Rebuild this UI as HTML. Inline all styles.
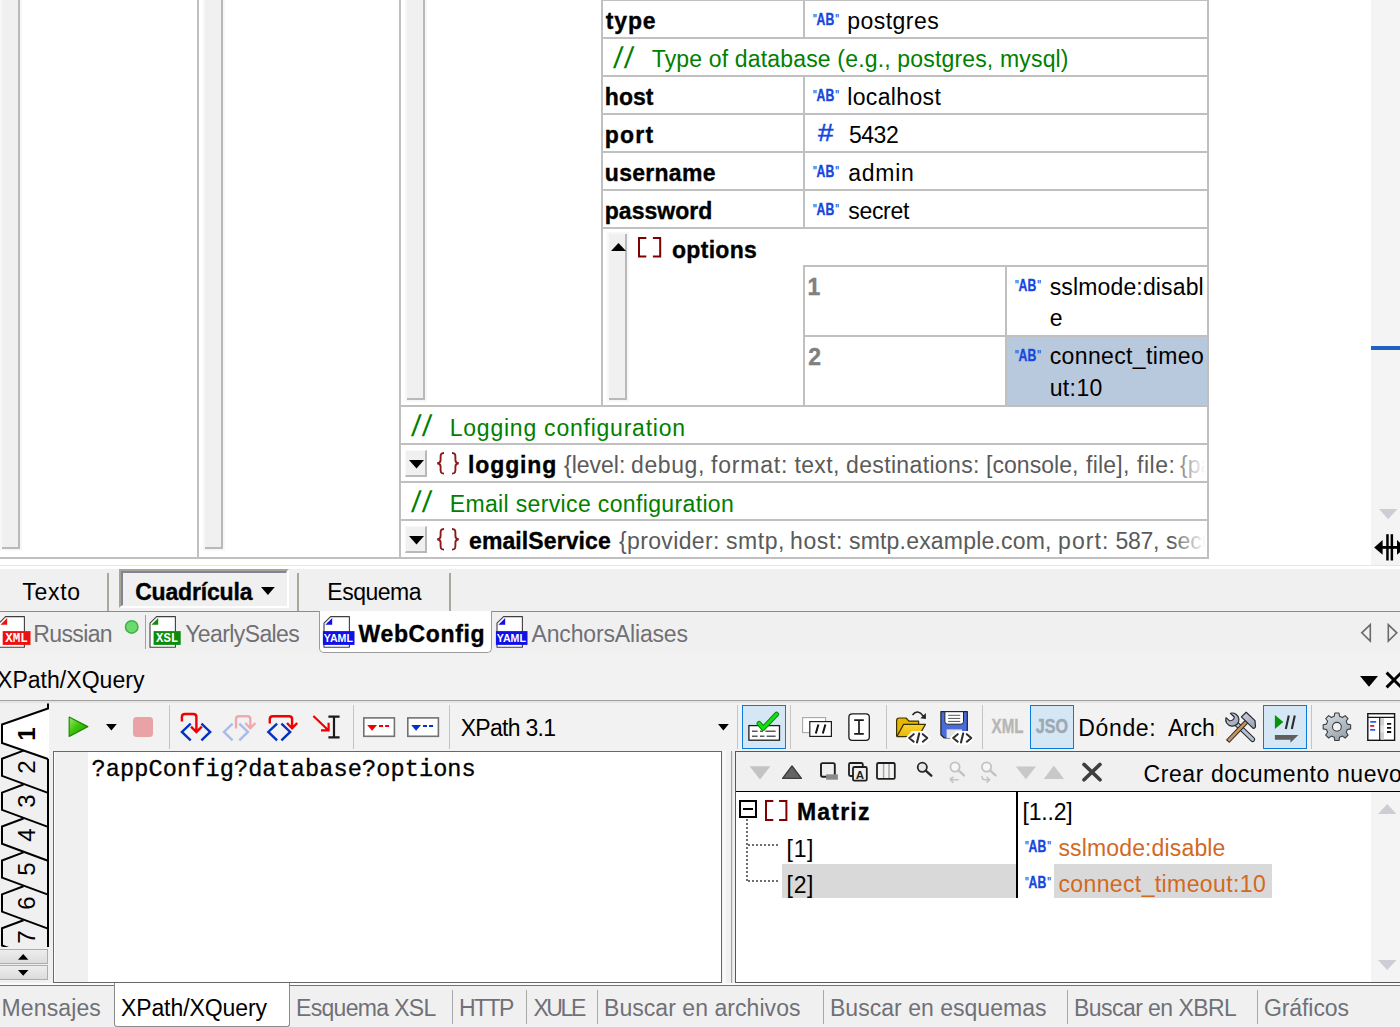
<!DOCTYPE html>
<html lang="es"><head><meta charset="utf-8"><title>XMLSpy - WebConfig</title>
<style>
html,body{margin:0;padding:0;}
body{width:1400px;height:1027px;position:relative;overflow:hidden;background:#fff;font-family:"Liberation Sans",sans-serif;color:#000;}
.a{position:absolute;box-sizing:border-box;}
.t{position:absolute;white-space:pre;}
svg{position:absolute;overflow:visible;}
.ab{font-family:"Liberation Sans",sans-serif;font-weight:700;font-size:16px;fill:#1747DC;stroke:#1747DC;stroke-width:0.35px;}
</style></head><body>
<div class="a" id="gridview" style="left:0;top:0;width:1400px;height:566px;background:#fff;overflow:hidden"><div class="a" style="left:0px;top:-12px;width:22px;height:563px;background:#F7F7F7;"></div><div class="a" style="left:2px;top:-10px;width:18px;height:559px;background:#F0F0F0;border-right:2px solid #B9B9B9;border-bottom:2px solid #B9B9B9;"></div><div class="a" style="left:203px;top:-12px;width:22px;height:563px;background:#F7F7F7;"></div><div class="a" style="left:205px;top:-10px;width:18px;height:559px;background:#F0F0F0;border-right:2px solid #B9B9B9;border-bottom:2px solid #B9B9B9;"></div><div class="a" style="left:405px;top:-12px;width:22px;height:414px;background:#F7F7F7;"></div><div class="a" style="left:407px;top:-10px;width:18px;height:410px;background:#F0F0F0;border-right:2px solid #B9B9B9;border-bottom:2px solid #B9B9B9;"></div><div class="a" style="left:607px;top:232px;width:22px;height:170px;background:#F7F7F7;"></div><div class="a" style="left:609px;top:234px;width:18px;height:166px;background:#F0F0F0;border-right:2px solid #B9B9B9;border-bottom:2px solid #B9B9B9;"></div><div class="a" style="left:1007px;top:337px;width:200px;height:68px;background:#B8C8DD;"></div><div class="a" style="left:197px;top:0px;width:2px;height:559px;background:#C0C0C0;"></div><div class="a" style="left:399px;top:0px;width:2px;height:559px;background:#C0C0C0;"></div><div class="a" style="left:601px;top:0px;width:2px;height:407px;background:#C0C0C0;"></div><div class="a" style="left:803px;top:0px;width:2px;height:38px;background:#C0C0C0;"></div><div class="a" style="left:803px;top:76px;width:2px;height:153px;background:#C0C0C0;"></div><div class="a" style="left:803px;top:265px;width:2px;height:142px;background:#C0C0C0;"></div><div class="a" style="left:1005px;top:265px;width:2px;height:142px;background:#C0C0C0;"></div><div class="a" style="left:1207px;top:0px;width:2px;height:559px;background:#C0C0C0;"></div><div class="a" style="left:601px;top:-1px;width:608px;height:2px;background:#C0C0C0;"></div><div class="a" style="left:601px;top:37px;width:608px;height:2px;background:#C0C0C0;"></div><div class="a" style="left:601px;top:75px;width:608px;height:2px;background:#C0C0C0;"></div><div class="a" style="left:601px;top:113px;width:608px;height:2px;background:#C0C0C0;"></div><div class="a" style="left:601px;top:151px;width:608px;height:2px;background:#C0C0C0;"></div><div class="a" style="left:601px;top:189px;width:608px;height:2px;background:#C0C0C0;"></div><div class="a" style="left:601px;top:227px;width:608px;height:2px;background:#C0C0C0;"></div><div class="a" style="left:803px;top:265px;width:406px;height:2px;background:#C0C0C0;"></div><div class="a" style="left:803px;top:335px;width:406px;height:2px;background:#C0C0C0;"></div><div class="a" style="left:399px;top:405px;width:810px;height:2px;background:#C0C0C0;"></div><div class="a" style="left:399px;top:443px;width:810px;height:2px;background:#C0C0C0;"></div><div class="a" style="left:399px;top:481px;width:810px;height:2px;background:#C0C0C0;"></div><div class="a" style="left:399px;top:519px;width:810px;height:2px;background:#C0C0C0;"></div><div class="a" style="left:0px;top:557px;width:1209px;height:2px;background:#C0C0C0;"></div><span class="t" style="left:605.80px;top:6.23px;font-size:23px;line-height:30px;font-weight:700;letter-spacing:0.833px;-webkit-text-stroke:0.35px;">type</span><span class="t" style="left:604.80px;top:82.23px;font-size:23px;line-height:30px;font-weight:700;letter-spacing:0.037px;-webkit-text-stroke:0.35px;">host</span><span class="t" style="left:604.80px;top:120.23px;font-size:23px;line-height:30px;font-weight:700;letter-spacing:1.184px;-webkit-text-stroke:0.35px;">port</span><span class="t" style="left:604.80px;top:158.23px;font-size:23px;line-height:30px;font-weight:700;letter-spacing:0.289px;-webkit-text-stroke:0.35px;">username</span><span class="t" style="left:604.80px;top:196.23px;font-size:23px;line-height:30px;font-weight:700;letter-spacing:0.027px;-webkit-text-stroke:0.35px;">password</span><svg style="left:813px;top:13px" width="27" height="13" viewBox="0 0 27 13"><text class="ab" x="0" y="10.5" textLength="3.8" lengthAdjust="spacingAndGlyphs" style="font-size:14px;font-weight:400;stroke-width:0.2px">"</text><text class="ab" x="3.6" y="11.9" textLength="17.6" lengthAdjust="spacingAndGlyphs">AB</text><text class="ab" x="22.2" y="10.5" textLength="3.8" lengthAdjust="spacingAndGlyphs" style="font-size:14px;font-weight:400;stroke-width:0.2px">"</text></svg><span class="t" style="left:847.20px;top:6.23px;font-size:23px;line-height:30px;letter-spacing:0.469px;">postgres</span><svg style="left:813px;top:89px" width="27" height="13" viewBox="0 0 27 13"><text class="ab" x="0" y="10.5" textLength="3.8" lengthAdjust="spacingAndGlyphs" style="font-size:14px;font-weight:400;stroke-width:0.2px">"</text><text class="ab" x="3.6" y="11.9" textLength="17.6" lengthAdjust="spacingAndGlyphs">AB</text><text class="ab" x="22.2" y="10.5" textLength="3.8" lengthAdjust="spacingAndGlyphs" style="font-size:14px;font-weight:400;stroke-width:0.2px">"</text></svg><span class="t" style="left:847.20px;top:82.23px;font-size:23px;line-height:30px;letter-spacing:0.352px;">localhost</span><span class="t" style="left:818.30px;top:117.96px;font-size:23.5px;line-height:31px;color:#1148E0;transform:scaleX(1.1769);transform-origin:0 0;-webkit-text-stroke:0.45px #1148E0;">#</span><span class="t" style="left:848.90px;top:120.43px;font-size:23px;line-height:30px;letter-spacing:-0.458px;">5432</span><svg style="left:813px;top:165px" width="27" height="13" viewBox="0 0 27 13"><text class="ab" x="0" y="10.5" textLength="3.8" lengthAdjust="spacingAndGlyphs" style="font-size:14px;font-weight:400;stroke-width:0.2px">"</text><text class="ab" x="3.6" y="11.9" textLength="17.6" lengthAdjust="spacingAndGlyphs">AB</text><text class="ab" x="22.2" y="10.5" textLength="3.8" lengthAdjust="spacingAndGlyphs" style="font-size:14px;font-weight:400;stroke-width:0.2px">"</text></svg><span class="t" style="left:848.20px;top:158.23px;font-size:23px;line-height:30px;letter-spacing:0.737px;">admin</span><svg style="left:813px;top:203px" width="27" height="13" viewBox="0 0 27 13"><text class="ab" x="0" y="10.5" textLength="3.8" lengthAdjust="spacingAndGlyphs" style="font-size:14px;font-weight:400;stroke-width:0.2px">"</text><text class="ab" x="3.6" y="11.9" textLength="17.6" lengthAdjust="spacingAndGlyphs">AB</text><text class="ab" x="22.2" y="10.5" textLength="3.8" lengthAdjust="spacingAndGlyphs" style="font-size:14px;font-weight:400;stroke-width:0.2px">"</text></svg><span class="t" style="left:848.20px;top:196.23px;font-size:23px;line-height:30px;letter-spacing:-0.288px;">secret</span><span class="t" style="left:613.00px;top:37.61px;font-size:30px;line-height:39px;color:#008000;transform:skewX(-6deg);transform-origin:0 78%;letter-spacing:2.3px;">//</span><span class="t" style="left:651.70px;top:44.23px;font-size:23px;line-height:30px;color:#008000;letter-spacing:0.166px;">Type of database (e.g., postgres, mysql)</span><svg style="left:611px;top:243px" width="15" height="8" viewBox="0 0 15 8"><polygon points="0,8 15,8 7.5,0" fill="#000"/></svg><svg style="left:638px;top:237px" width="23.2" height="20.5" viewBox="0 0 23.2 20.5" fill="none" stroke="#800000" stroke-width="2"><path d="M8.3,1.0 H1.0 V19.5 H8.3"/><path d="M14.899999999999999,1.0 H22.2 V19.5 H14.899999999999999"/></svg><span class="t" style="left:672.00px;top:234.63px;font-size:23px;line-height:30px;font-weight:700;letter-spacing:0.292px;-webkit-text-stroke:0.35px;">options</span><span class="t" style="left:807.60px;top:272.33px;font-size:23px;line-height:30px;font-weight:700;color:#808080;-webkit-text-stroke:0.35px;">1</span><span class="t" style="left:808.30px;top:342.33px;font-size:23px;line-height:30px;font-weight:700;color:#808080;-webkit-text-stroke:0.35px;">2</span><svg style="left:1015px;top:279px" width="27" height="13" viewBox="0 0 27 13"><text class="ab" x="0" y="10.5" textLength="3.8" lengthAdjust="spacingAndGlyphs" style="font-size:14px;font-weight:400;stroke-width:0.2px">"</text><text class="ab" x="3.6" y="11.9" textLength="17.6" lengthAdjust="spacingAndGlyphs">AB</text><text class="ab" x="22.2" y="10.5" textLength="3.8" lengthAdjust="spacingAndGlyphs" style="font-size:14px;font-weight:400;stroke-width:0.2px">"</text></svg><span class="t" style="left:1049.70px;top:272.03px;font-size:23px;line-height:31.4px;letter-spacing:0.145px;width:157.5px;white-space:normal;word-break:break-all;">sslmode:disable</span><svg style="left:1015px;top:349px" width="27" height="13" viewBox="0 0 27 13"><text class="ab" x="0" y="10.5" textLength="3.8" lengthAdjust="spacingAndGlyphs" style="font-size:14px;font-weight:400;stroke-width:0.2px">"</text><text class="ab" x="3.6" y="11.9" textLength="17.6" lengthAdjust="spacingAndGlyphs">AB</text><text class="ab" x="22.2" y="10.5" textLength="3.8" lengthAdjust="spacingAndGlyphs" style="font-size:14px;font-weight:400;stroke-width:0.2px">"</text></svg><span class="t" style="left:1049.70px;top:341.13px;font-size:23px;line-height:31.4px;letter-spacing:0.375px;width:157.5px;white-space:normal;word-break:break-all;">connect_timeout:10</span><span class="t" style="left:411.00px;top:405.90px;font-size:30px;line-height:39px;color:#008000;transform:skewX(-6deg);transform-origin:0 78%;letter-spacing:2.3px;">//</span><span class="t" style="left:449.70px;top:412.53px;font-size:23px;line-height:30px;color:#008000;letter-spacing:0.772px;">Logging configuration</span><div class="a" style="left:405px;top:450px;width:22px;height:27px;background:#F0F0F0;border-right:2px solid #B9B9B9;border-bottom:2px solid #B9B9B9;border-left:1px solid #F8F8F8;border-top:1px solid #F8F8F8;"></div><svg style="left:409px;top:459.5px" width="15" height="8.5" viewBox="0 0 15 8.5"><polygon points="0,0 15,0 7.5,8.5" fill="#000"/></svg><svg style="left:435.7px;top:451.8px" width="24" height="23" viewBox="0 0 24 23" fill="none" stroke="#8B1A1A" stroke-width="1.9"><path d="M8,1 C4.5,1 4.6,3 4.6,5.5 V8 C4.6,10.3 3.5,11.2 1.2,11.3 C3.5,11.4 4.6,12.3 4.6,14.6 V17 C4.6,19.6 4.5,21.6 8,21.6"/><path d="M16,1 C19.5,1 19.4,3 19.4,5.5 V8 C19.4,10.3 20.5,11.2 22.8,11.3 C20.5,11.4 19.4,12.3 19.4,14.6 V17 C19.4,19.6 19.5,21.6 16,21.6"/></svg><span class="t" style="left:468.00px;top:450.23px;font-size:23px;line-height:30px;font-weight:700;letter-spacing:0.887px;-webkit-text-stroke:0.35px;">logging</span><div class="a" style="left:560px;top:445px;width:647px;height:36px;overflow:hidden"><span class="t" style="left:4.00px;top:5.23px;font-size:23px;line-height:30px;color:#5A5A5A;">{level:</span><span class="t" style="left:71.00px;top:5.23px;font-size:23px;line-height:30px;color:#5A5A5A;letter-spacing:0.608px;">debug,</span><span class="t" style="left:151.00px;top:5.23px;font-size:23px;line-height:30px;color:#5A5A5A;letter-spacing:0.803px;">format:</span><span class="t" style="left:234.40px;top:5.23px;font-size:23px;line-height:30px;color:#5A5A5A;letter-spacing:0.382px;">text,</span><span class="t" style="left:286.00px;top:5.23px;font-size:23px;line-height:30px;color:#5A5A5A;letter-spacing:0.354px;">destinations:</span><span class="t" style="left:426.00px;top:5.23px;font-size:23px;line-height:30px;color:#5A5A5A;letter-spacing:0.042px;">[console,</span><span class="t" style="left:526.00px;top:5.23px;font-size:23px;line-height:30px;color:#5A5A5A;letter-spacing:0.242px;">file],</span><span class="t" style="left:577.00px;top:5.23px;font-size:23px;line-height:30px;color:#5A5A5A;letter-spacing:0.525px;">file:</span><span class="t" style="left:620.00px;top:5.23px;font-size:23px;line-height:30px;color:#5A5A5A;">{path:</span><div class="a" style="right:0;top:0;width:36px;height:36px;background:linear-gradient(to right,rgba(255,255,255,0),#fff 96%)"></div></div><span class="t" style="left:411.00px;top:481.90px;font-size:30px;line-height:39px;color:#008000;transform:skewX(-6deg);transform-origin:0 78%;letter-spacing:2.3px;">//</span><span class="t" style="left:449.70px;top:488.53px;font-size:23px;line-height:30px;color:#008000;letter-spacing:0.356px;">Email service configuration</span><div class="a" style="left:405px;top:526px;width:22px;height:27px;background:#F0F0F0;border-right:2px solid #B9B9B9;border-bottom:2px solid #B9B9B9;border-left:1px solid #F8F8F8;border-top:1px solid #F8F8F8;"></div><svg style="left:409px;top:535.5px" width="15" height="8.5" viewBox="0 0 15 8.5"><polygon points="0,0 15,0 7.5,8.5" fill="#000"/></svg><svg style="left:435.7px;top:527.8px" width="24" height="23" viewBox="0 0 24 23" fill="none" stroke="#8B1A1A" stroke-width="1.9"><path d="M8,1 C4.5,1 4.6,3 4.6,5.5 V8 C4.6,10.3 3.5,11.2 1.2,11.3 C3.5,11.4 4.6,12.3 4.6,14.6 V17 C4.6,19.6 4.5,21.6 8,21.6"/><path d="M16,1 C19.5,1 19.4,3 19.4,5.5 V8 C19.4,10.3 20.5,11.2 22.8,11.3 C20.5,11.4 19.4,12.3 19.4,14.6 V17 C19.4,19.6 19.5,21.6 16,21.6"/></svg><span class="t" style="left:469.00px;top:526.23px;font-size:23px;line-height:30px;font-weight:700;letter-spacing:0.103px;-webkit-text-stroke:0.35px;">emailService</span><div class="a" style="left:614px;top:521px;width:593px;height:36px;overflow:hidden"><span class="t" style="left:5.00px;top:5.23px;font-size:23px;line-height:30px;color:#5A5A5A;letter-spacing:0.358px;">{provider:</span><span class="t" style="left:112.00px;top:5.23px;font-size:23px;line-height:30px;color:#5A5A5A;letter-spacing:0.540px;">smtp,</span><span class="t" style="left:176.00px;top:5.23px;font-size:23px;line-height:30px;color:#5A5A5A;letter-spacing:0.632px;">host:</span><span class="t" style="left:235.00px;top:5.23px;font-size:23px;line-height:30px;color:#5A5A5A;letter-spacing:0.187px;">smtp.example.com,</span><span class="t" style="left:444.00px;top:5.23px;font-size:23px;line-height:30px;color:#5A5A5A;letter-spacing:1.092px;">port:</span><span class="t" style="left:501.60px;top:5.23px;font-size:23px;line-height:30px;color:#5A5A5A;letter-spacing:-0.325px;">587,</span><span class="t" style="left:552.00px;top:5.23px;font-size:23px;line-height:30px;color:#5A5A5A;">secure:</span><div class="a" style="right:0;top:0;width:36px;height:36px;background:linear-gradient(to right,rgba(255,255,255,0),#fff 96%)"></div></div><div class="a" style="left:1371px;top:0px;width:29px;height:565px;background:#F4F4F4;"></div><div class="a" style="left:1371px;top:346px;width:29px;height:4px;background:#1F62C2;"></div><svg style="left:1378.7px;top:508.8px" width="18.4" height="10.3" viewBox="0 0 18.4 10.3"><polygon points="0,0 18.4,0 9.2,10.3" fill="#CDCDD5"/></svg><svg style="left:1372px;top:532px" width="28" height="30" viewBox="1372 532 28 30"><polygon points="1374.2,547.4 1382.6,540 1382.6,554.8" fill="#000"/><rect x="1382" y="546" width="18" height="2.8" fill="#000"/><rect x="1386.2" y="534.2" width="2.5" height="26.3" fill="#000"/><rect x="1390.6" y="534.2" width="2.5" height="26.3" fill="#000"/><polygon points="1405.4,547.4 1397,540 1397,554.8" fill="#000"/></svg><div class="a" style="left:0px;top:565px;width:1400px;height:1px;background:#E6E6E6;"></div></div><div class="a" style="left:0px;top:566px;width:1400px;height:3px;background:#fff;"></div><div class="a" style="left:0px;top:569px;width:1400px;height:458px;background:#F0F0F0;"></div><div class="a" id="viewtabs" style="left:0;top:569px;width:1400px;height:42px;background:#F0F0F0"><div class="a" style="left:107px;top:4px;width:2px;height:38px;background:#ACA899;"></div><div class="a" style="left:297px;top:4px;width:2px;height:38px;background:#ACA899;"></div><div class="a" style="left:449px;top:4px;width:2px;height:38px;background:#ACA899;"></div><span class="t" style="left:22.30px;top:8.33px;font-size:23px;line-height:30px;letter-spacing:0.680px;">Texto</span><div class="a" style="left:119px;top:0px;width:170px;height:39px;background:#F0F0F0;border-top:2px solid #A8A496;border-left:2px solid #A8A496;border-right:2px solid #FFFFFF;border-bottom:2px solid #FFFFFF;"></div><div class="a" style="left:121px;top:2px;width:166px;height:35px;border-top:2px solid #7F8496;border-left:2px solid #7F8496;border-right:1px solid #F0F0F0;border-bottom:1px solid #F0F0F0;"></div><span class="t" style="left:135.20px;top:8.33px;font-size:23px;line-height:30px;font-weight:700;letter-spacing:-0.175px;-webkit-text-stroke:0.35px;">Cuadrícula</span><svg style="left:261.2px;top:18.1px" width="13.8" height="8.1" viewBox="0 0 13.8 8.1"><polygon points="0,0 13.8,0 6.9,8.1" fill="#000"/></svg><span class="t" style="left:327.30px;top:8.33px;font-size:23px;line-height:30px;letter-spacing:-0.496px;">Esquema</span></div><div class="a" id="filetabs" style="left:0;top:611px;width:1400px;height:42px;background:#F0F0F0"><div class="a" style="left:0px;top:0px;width:1400px;height:1px;background:#8C8C8C;"></div><div class="a" style="left:0px;top:42px;width:1400px;height:1px;background:#FCFCFC;"></div><div class="a" style="left:319px;top:0px;width:173px;height:42px;background:#fff;border:1px solid #9A9A9A;border-top:none;border-radius:0 0 5px 5px;"></div><svg style="left:-4.6px;top:4px" width="40" height="34" viewBox="0 0 40 34"><path d="M10.6,1.6 H29.4 V32.3 H4.0 V8.2 Z" fill="#fff" stroke="#3E3E3E" stroke-width="1.1" stroke-linejoin="round"/><path d="M5.4,9.8 H12.2 V3 Z" fill="#EE0F0F"/><rect x="7.7" y="16.1" width="27.8" height="13.8" fill="#EE0F0F"/><text x="10.2" y="26.9" textLength="22.6" lengthAdjust="spacingAndGlyphs" style="font-family:'Liberation Mono',monospace;font-weight:700;font-size:12px;fill:#fff">XML</text></svg><span class="t" style="left:33.30px;top:7.93px;font-size:23px;line-height:30px;color:#707076;letter-spacing:-0.634px;">Russian</span><svg style="left:124px;top:8px" width="16" height="16" viewBox="0 0 16 16"><circle cx="7.7" cy="7.9" r="6.2" fill="#6BDB6B" stroke="#43B04A" stroke-width="1.6"/></svg><div class="a" style="left:145px;top:4px;width:1px;height:34px;background:#A0A0A0;"></div><svg style="left:146.2px;top:4px" width="40" height="34" viewBox="0 0 40 34"><path d="M10.6,1.6 H29.4 V32.3 H4.0 V8.2 Z" fill="#fff" stroke="#3E3E3E" stroke-width="1.1" stroke-linejoin="round"/><path d="M5.4,9.8 H12.2 V3 Z" fill="#0C8C0C"/><rect x="7.6" y="16.1" width="27.1" height="13.8" fill="#0C8C0C"/><text x="10.0" y="26.9" textLength="22.2" lengthAdjust="spacingAndGlyphs" style="font-family:'Liberation Mono',monospace;font-weight:700;font-size:12px;fill:#fff">XSL</text></svg><span class="t" style="left:185.20px;top:7.93px;font-size:23px;line-height:30px;color:#707076;letter-spacing:-0.602px;">YearlySales</span><svg style="left:320.1px;top:4px" width="40" height="34" viewBox="0 0 40 34"><path d="M10.6,1.6 H29.4 V32.3 H4.0 V8.2 Z" fill="#fff" stroke="#3E3E3E" stroke-width="1.1" stroke-linejoin="round"/><path d="M5.4,9.8 H12.2 V3 Z" fill="#1010E8"/><rect x="2.9" y="16.1" width="31.6" height="13.8" fill="#1010E8"/><text x="3.8" y="26.9" textLength="29.1" lengthAdjust="spacingAndGlyphs" style="font-family:'Liberation Sans',sans-serif;font-weight:700;font-size:10.6px;fill:#fff">YAML</text></svg><span class="t" style="left:358.60px;top:7.93px;font-size:23px;line-height:30px;font-weight:700;letter-spacing:0.626px;-webkit-text-stroke:0.35px;">WebConfig</span><svg style="left:493.4px;top:4px" width="40" height="34" viewBox="0 0 40 34"><path d="M10.6,1.6 H29.4 V32.3 H4.0 V8.2 Z" fill="#fff" stroke="#3E3E3E" stroke-width="1.1" stroke-linejoin="round"/><path d="M5.4,9.8 H12.2 V3 Z" fill="#1010E8"/><rect x="2.9" y="16.1" width="31.6" height="13.8" fill="#1010E8"/><text x="3.8" y="26.9" textLength="29.1" lengthAdjust="spacingAndGlyphs" style="font-family:'Liberation Sans',sans-serif;font-weight:700;font-size:10.6px;fill:#fff">YAML</text></svg><span class="t" style="left:531.50px;top:7.93px;font-size:23px;line-height:30px;color:#707076;letter-spacing:-0.155px;">AnchorsAliases</span><svg style="left:1358px;top:11px" width="42" height="22" viewBox="1358 622 42 22" fill="none" stroke="#6A6A6A" stroke-width="1.6"><path d="M1370.3,624.6 V641 L1361.8,632.8 Z"/><path d="M1388.3,624.6 V641 L1396.8,632.8 Z"/></svg></div><div class="a" id="xpheader" style="left:0;top:653px;width:1400px;height:47px;background:#F2F2F2;overflow:hidden"><span class="t" style="left:-3.00px;top:12.23px;font-size:23px;line-height:30px;letter-spacing:0.035px;">XPath/XQuery</span><svg style="left:1360px;top:22.7px" width="18" height="10.8" viewBox="0 0 18 10.8"><polygon points="0,0 18,0 9.0,10.8" fill="#000"/></svg><svg style="left:1384px;top:17px" width="20" height="20" viewBox="0 0 20 20" stroke="#000" stroke-width="3" fill="none"><path d="M2.6,2.6 L17.4,17.4 M17.4,2.6 L2.6,17.4"/></svg></div><div class="a" style="left:0px;top:700px;width:1400px;height:1px;background:#A0A0A0;"></div><div class="a" style="left:0px;top:701px;width:1400px;height:2px;background:#E4E4E4;"></div><div class="a" style="left:49px;top:703px;width:1351px;height:48px;background:#F2F2F2;"></div><svg style="left:66px;top:714px" width="26" height="26" viewBox="66 714 26 26" ><defs><linearGradient id="gplay" x1="0" y1="0" x2="1" y2="1"><stop offset="0" stop-color="#9AEB6E"/><stop offset="0.45" stop-color="#3FC40C"/><stop offset="1" stop-color="#1FA000"/></linearGradient></defs><polygon points="69.2,717 87.8,726.6 69.2,736.4" fill="url(#gplay)" stroke="#1E8A00" stroke-width="1.2" stroke-linejoin="round"/></svg><svg style="left:105.8px;top:723.8px" width="10.8" height="6.6" viewBox="0 0 10.8 6.6"><polygon points="0,0 10.8,0 5.4,6.6" fill="#000"/></svg><div class="a" style="left:133.2px;top:716.9px;width:19.8px;height:19.8px;background:#E9A3A6;border-radius:3.5px;"></div><div class="a" style="left:169px;top:705px;width:1px;height:44px;background:#C4C4C4;"></div><svg style="left:178px;top:710px" width="36" height="34" viewBox="178 710 36 34" ><g fill="none" stroke-width="2.4"><path d="M190.7,723.6 L181.9,731.9 L190.7,740.4 M201.4,723.6 L210.2,731.9 L201.4,740.4" stroke="#0433C2"/><path d="M181.9,721.4 V717 Q181.9,714 185,714 H193.3 Q196.4,714 196.4,717 V731.6 M191,726.6 L196.4,732 L201.8,726.6" stroke="#F00000"/></g></svg><svg style="left:221px;top:710px" width="38" height="34" viewBox="221 710 38 34" ><g fill="none" stroke-width="2.4"><path d="M232.6,723.6 L224,731.9 L232.6,740.4 M239.3,723.6 L247.9,731.9 L239.3,740.4" stroke="#A9BBEA"/><path d="M236,728.6 V719 Q236,716.2 239,716.2 H247.3 Q250.3,716.2 250.3,719 V728 M245.2,723 L250.3,728.3 L255.4,723" stroke="#F2A9AE"/></g></svg><svg style="left:264px;top:710px" width="36" height="34" viewBox="264 710 36 34" ><g fill="none" stroke-width="2.4"><path d="M277.1,723.6 L268.3,731.9 L277.1,740.4 M281.4,723.6 L290.2,731.9 L281.4,740.4" stroke="#0433C2"/><path d="M269.8,723.4 V719 Q269.8,716.2 272.8,716.2 H289.1 Q292.1,716.2 292.1,719 V728 M287,723 L292.1,728.3 L297.2,723" stroke="#F00000"/></g></svg><svg style="left:310px;top:712px" width="32" height="30" viewBox="310 712 32 30" ><g fill="none" stroke-width="2.2"><path d="M313.4,716 L328,730 M321,730.4 H328.6 V722.8" stroke="#F00000"/><path d="M334,716.6 V737.4 M328.4,716.6 H339.6 M328.4,737.4 H339.6" stroke="#1A1A1A"/></g></svg><div class="a" style="left:353px;top:705px;width:1px;height:44px;background:#C4C4C4;"></div><svg style="left:362.9px;top:717px" width="33" height="21" viewBox="362.9 717 33 21" ><rect x="363.7" y="717.9" width="30.6" height="18.4" fill="#fff" stroke="#727272" stroke-width="1.6"/><polygon points="367.09999999999997,725 376.9,725 372.0,730.8" fill="#F00000"/><path d="M378.9,726 H382.9 M385.0,726 H389.0" stroke="#F00000" stroke-width="2"/></svg><svg style="left:406.9px;top:717px" width="33" height="21" viewBox="406.9 717 33 21" ><rect x="407.7" y="717.9" width="30.6" height="18.4" fill="#fff" stroke="#727272" stroke-width="1.6"/><polygon points="411.09999999999997,725 420.9,725 416.0,730.8" fill="#0030D0"/><path d="M422.9,726 H426.9 M429.0,726 H433.0" stroke="#0030D0" stroke-width="2"/></svg><div class="a" style="left:449px;top:705px;width:1px;height:44px;background:#C4C4C4;"></div><span class="t" style="left:460.70px;top:713.33px;font-size:23px;line-height:30px;letter-spacing:-0.703px;">XPath 3.1</span><svg style="left:717.9px;top:724px" width="10.8" height="6.4" viewBox="0 0 10.8 6.4"><polygon points="0,0 10.8,0 5.4,6.4" fill="#000"/></svg><div class="a" style="left:737px;top:705px;width:1px;height:44px;background:#C4C4C4;"></div><div class="a" style="left:742px;top:705px;width:44px;height:44px;background:#D5E6F5;border:1.4px solid #0A7BDC;"></div><svg style="left:746px;top:710px" width="36" height="34" viewBox="746 710 36 34" ><rect x="748.9" y="725.6" width="30.6" height="14.6" fill="#fff" stroke="#1E1E1E" stroke-width="1.3"/><path d="M752,731.2 H757.6 M760,731.2 H763 M765.4,731.2 H775.6 M752,736.2 H757.6 M760,736.2 H764.4 M766.6,736.2 H775.6" stroke="#5A5A5A" stroke-width="1.5"/><path d="M759,723.3 L763.2,728.3 L776.6,714.2" fill="none" stroke="#0A8A0A" stroke-width="5" stroke-linecap="round" stroke-linejoin="round"/><path d="M759,723.3 L763.2,728.3 L776.6,714.2" fill="none" stroke="#11E011" stroke-width="3" stroke-linecap="round" stroke-linejoin="round"/></svg><div class="a" style="left:790px;top:705px;width:1px;height:44px;background:#C4C4C4;"></div><svg style="left:800px;top:714px" width="34" height="26" viewBox="800 714 34 26" ><rect x="802.6" y="717.6" width="23" height="15" fill="#fff" stroke="#A8A8A8" stroke-width="1.1"/><rect x="809.8" y="721.6" width="21.6" height="14.8" fill="#fff" stroke="#1E1E1E" stroke-width="1.2"/><path d="M818.4,724.4 L815.8,733.6 M825.4,724.4 L822.8,733.6" stroke="#111" stroke-width="2"/></svg><svg style="left:846px;top:711px" width="26" height="32" viewBox="846 711 26 32" ><rect x="848.9" y="713.9" width="20.4" height="26.4" rx="3.4" fill="#fff" stroke="#1A1A1A" stroke-width="1.3"/><path d="M859,720.2 V733.8 M854.2,720.2 H863.8 M854.2,733.8 H863.8" stroke="#1A1A1A" stroke-width="1.7" fill="none"/></svg><div class="a" style="left:886px;top:705px;width:1px;height:44px;background:#C4C4C4;"></div><svg style="left:894px;top:709px" width="38" height="36" viewBox="894 709 38 36" ><defs><linearGradient id="gfold" x1="0" y1="0" x2="0" y2="1"><stop offset="0" stop-color="#F7D535"/><stop offset="1" stop-color="#E9B800"/></linearGradient></defs><path d="M896.6,736 V720.6 Q896.6,718 899.2,718 H906 L909,721.2 H918.6 V724.6" fill="#E8B600" stroke="#3A3000" stroke-width="1.2" stroke-linejoin="round"/><path d="M896.8,736.6 L903.6,724.4 H925.4 L918.4,736.6 Z" fill="url(#gfold)" stroke="#3A3000" stroke-width="1.2" stroke-linejoin="round"/><path d="M912.5,714.9 Q917.6,708.6 923.4,716.2" fill="none" stroke="#222" stroke-width="1.6"/><path d="M925.9,713 V719 L920.4,718.3 Z" fill="#222"/><polygon points="905.6999999999999,737.9499999999999 911.9,731.0999999999999 924.5999999999999,731.0999999999999 930.8,737.9499999999999 924.5999999999999,744.8 911.9,744.8" fill="#fff"/><path d="M913.6999999999999,734.1999999999999 L909.1999999999999,737.9499999999999 L913.6999999999999,741.6999999999999 M922.8,734.1999999999999 L927.3,737.9499999999999 L922.8,741.6999999999999 M919.1999999999999,733.4 L917.0,742.5" fill="none" stroke="#2E2E2E" stroke-width="2.1" stroke-linecap="round" stroke-linejoin="round"/></svg><svg style="left:938px;top:709px" width="38" height="36" viewBox="938 709 38 36" ><path d="M940.9,711.7 H967.3 V738 H944.2 L940.9,734.8 Z" fill="#4A6BDE" stroke="#222226" stroke-width="1.2" stroke-linejoin="round"/><path d="M944.9,711.7 H963.5 V721.6 Q963.5,724.2 960.9,724.2 H947.5 Q944.9,724.2 944.9,721.6 Z" fill="#fff" stroke="#222226" stroke-width="1"/><path d="M948.2,715.3 H960.2 M948.2,718.4 H960.2 M948.2,721.4 H960.2" stroke="#555" stroke-width="1"/><rect x="946.6" y="729.4" width="15.4" height="8.6" fill="#E4E4E4"/><polygon points="949.6999999999999,737.9499999999999 955.9,731.0999999999999 968.5999999999999,731.0999999999999 974.8,737.9499999999999 968.5999999999999,744.8 955.9,744.8" fill="#fff"/><path d="M957.6999999999999,734.1999999999999 L953.1999999999999,737.9499999999999 L957.6999999999999,741.6999999999999 M966.8,734.1999999999999 L971.3,737.9499999999999 L966.8,741.6999999999999 M963.1999999999999,733.4 L961.0,742.5" fill="none" stroke="#2E2E2E" stroke-width="2.1" stroke-linecap="round" stroke-linejoin="round"/></svg><div class="a" style="left:982px;top:705px;width:1px;height:44px;background:#C4C4C4;"></div><svg style="left:988px;top:714px" width="40" height="24" viewBox="988 714 40 24"><text x="991.6" y="733" textLength="32" lengthAdjust="spacingAndGlyphs" style="font-family:'Liberation Sans',sans-serif;font-weight:700;font-size:19.6px;fill:#B6B6B6;stroke:#B6B6B6;stroke-width:0.4px">XML</text></svg><div class="a" style="left:1030px;top:705px;width:44px;height:44px;background:#D5E6F5;border:1.4px solid #0A7BDC;"></div><svg style="left:1032px;top:714px" width="40" height="24" viewBox="1032 714 40 24"><text x="1035.8" y="733" textLength="32.4" lengthAdjust="spacingAndGlyphs" style="font-family:'Liberation Sans',sans-serif;font-weight:700;font-size:19.6px;fill:#9EA8B2;stroke:#9EA8B2;stroke-width:0.4px">JSO</text></svg><span class="t" style="left:1078.30px;top:713.33px;font-size:23px;line-height:30px;letter-spacing:0.645px;">Dónde:</span><span class="t" style="left:1167.90px;top:713.33px;font-size:23px;line-height:30px;letter-spacing:-0.133px;">Arch</span><svg style="left:1223px;top:710px" width="36" height="34" viewBox="1223 710 36 34" ><defs><linearGradient id="gtool" x1="0" y1="0" x2="1" y2="1"><stop offset="0" stop-color="#CDD4E2"/><stop offset="1" stop-color="#959FB4"/></linearGradient></defs><g stroke-linejoin="round" stroke-linecap="round"><path d="M1237,724.3 L1252.6,739.4" stroke="#2A2A2A" stroke-width="5.2"/><path d="M1237,724.3 L1252.6,739.4" stroke="#B7C0D2" stroke-width="3"/><path d="M1245.4,722.8 L1229.2,739.8" stroke="#2A2A2A" stroke-width="4.6" stroke-linecap="square"/><path d="M1245.4,722.8 L1229.2,739.8" stroke="#C9935C" stroke-width="2.6" stroke-linecap="square"/><path d="M1241.4,716.9 L1246.2,712.3 L1255,720.6 L1255.5,726.8 Q1254.6,728.8 1253.2,728.4 Z" fill="url(#gtool)" stroke="#2A2A2A" stroke-width="1.2"/><path d="M1230.4,713.3 A6.6,6.6 0 1 1 1226,717.7 L1229.6,720.9 Q1233.8,720.8 1234.3,717 Z" fill="url(#gtool)" stroke="#2A2A2A" stroke-width="1.2"/></g></svg><div class="a" style="left:1216px;top:719px;width:1px;height:2px;background:#F3EFA0;"></div><div class="a" style="left:1216px;top:724px;width:1px;height:12px;background:#F3EFA0;"></div><div class="a" style="left:1263px;top:705px;width:44px;height:44px;background:#D5E6F5;border:1.4px solid #0A7BDC;"></div><svg style="left:1270px;top:712px" width="32" height="34" viewBox="1270 712 32 34" ><polygon points="1274.9,715 1283.3,722 1274.9,729" fill="#079407"/><path d="M1288.8,715.6 L1285.8,729 M1294.8,715.6 L1291.8,729" stroke="#2C2C2C" stroke-width="2.1" fill="none"/><polygon points="1274.9,735 1298.4,735 1290.4,742.8 1290.4,739.8 1274.9,739.8" fill="#5E5E5E"/></svg><div class="a" style="left:1311px;top:705px;width:1px;height:44px;background:#C4C4C4;"></div><svg style="left:1321px;top:711px" width="32" height="32" viewBox="1321 711 32 32" ><defs><linearGradient id="ggear" x1="0" y1="0" x2="0.6" y2="1"><stop offset="0" stop-color="#DCE2E8"/><stop offset="1" stop-color="#9AA4AC"/></linearGradient></defs><polygon points="1334.23,716.34 1334.82,713.06 1338.98,713.06 1339.57,716.34 1342.41,717.51 1345.15,715.61 1348.09,718.55 1346.19,721.29 1347.36,724.13 1350.64,724.72 1350.64,728.88 1347.36,729.47 1346.19,732.31 1348.09,735.05 1345.15,737.99 1342.41,736.09 1339.57,737.26 1338.98,740.54 1334.82,740.54 1334.23,737.26 1331.39,736.09 1328.65,737.99 1325.71,735.05 1327.61,732.31 1326.44,729.47 1323.16,728.88 1323.16,724.72 1326.44,724.13 1327.61,721.29 1325.71,718.55 1328.65,715.61 1331.39,717.51" fill="url(#ggear)" stroke="#3A3E42" stroke-width="1.1" stroke-linejoin="round"/><circle cx="1336.9" cy="726.8" r="4.4" fill="#F4F4F4" stroke="#3A3E42" stroke-width="1.1"/></svg><svg style="left:1366px;top:712px" width="32" height="30" viewBox="1366 712 32 30" ><rect x="1367.8" y="713.7" width="26.8" height="26.6" fill="#fff" stroke="#151515" stroke-width="1.4"/><path d="M1367.8,717.4 H1394.6 M1379.8,717.4 V740.3" stroke="#151515" stroke-width="1.3"/><rect x="1380.6" y="718.2" width="3.4" height="21.4" fill="#D0D0D0"/><rect x="1380.6" y="725.4" width="3.4" height="7" fill="#E6E6E6"/><path d="M1370.2,721.9 H1376.2 M1370.2,729.9 H1375.2" stroke="#2A5CFF" stroke-width="1.7"/><path d="M1370.2,725.9 H1374.2" stroke="#F00000" stroke-width="1.7"/><path d="M1387,723.8 H1391.2 M1387,727.9 H1391.2 M1387,732 H1391.2" stroke="#111" stroke-width="1.8"/></svg><div class="a" style="left:53px;top:751px;width:669px;height:232px;background:#fff;border:1px solid #686868;"></div><div class="a" style="left:54.6px;top:752px;width:33.6px;height:230px;background:#F0F0F0;"></div><span class="t" style="left:91.60px;top:754.01px;font-size:23.6px;line-height:31px;font-family:'Liberation Mono', monospace;letter-spacing:0.072px;-webkit-text-stroke:0.3px;">?appConfig?database?options</span><div class="a" style="left:723px;top:751px;width:3px;height:232px;background:#F8F8F8;"></div><div class="a" style="left:731px;top:751px;width:1px;height:232px;background:#A4A4A4;"></div><div class="a" style="left:732px;top:751px;width:1px;height:232px;background:#E2E2E2;"></div><div class="a" style="left:0;top:702px;width:52px;height:245px;overflow:hidden"><svg style="left:0;top:0" width="52" height="245" viewBox="0 702 52 245"><polygon points="49,708.0 2,724.5 2,743.0 49,759.0" fill="#fff"/><path d="M48,703.5 V708.5 L2,724.5 V743.0 L48,759.0" fill="none" stroke="#000" stroke-width="2"/><path d="M23.5,750.6 L2,758.7 V775.9000000000001 L48,792.92" fill="none" stroke="#000" stroke-width="2"/><path d="M23.5,784.52 L2,792.62 V809.82 L48,826.8399999999999" fill="none" stroke="#000" stroke-width="2"/><path d="M23.5,818.44 L2,826.5400000000001 V843.7400000000001 L48,860.76" fill="none" stroke="#000" stroke-width="2"/><path d="M23.5,852.36 L2,860.46 V877.6600000000001 L48,894.68" fill="none" stroke="#000" stroke-width="2"/><path d="M23.5,886.2800000000001 L2,894.3800000000001 V911.5800000000002 L48,928.6" fill="none" stroke="#000" stroke-width="2"/><path d="M23.5,920.2 L2,928.3000000000001 V945.5000000000001 L48,962.52" fill="none" stroke="#000" stroke-width="2"/><path d="M23.5,954.12 L2,962.22 V979.4200000000001 L48,996.4399999999999" fill="none" stroke="#000" stroke-width="2"/><path d="M48,759.0 V947" fill="none" stroke="#000" stroke-width="2"/></svg></div><span class="t" style="left:12px;top:718.6px;width:30px;height:30px;line-height:30px;text-align:center;font-size:24px;font-weight:700;transform:rotate(-90deg);">1</span><span class="t" style="left:12px;top:752.3px;width:30px;height:30px;line-height:30px;text-align:center;font-size:24px;font-weight:400;transform:rotate(-90deg);">2</span><span class="t" style="left:12px;top:786.3px;width:30px;height:30px;line-height:30px;text-align:center;font-size:24px;font-weight:400;transform:rotate(-90deg);">3</span><span class="t" style="left:12px;top:820.2px;width:30px;height:30px;line-height:30px;text-align:center;font-size:24px;font-weight:400;transform:rotate(-90deg);">4</span><span class="t" style="left:12px;top:854.1px;width:30px;height:30px;line-height:30px;text-align:center;font-size:24px;font-weight:400;transform:rotate(-90deg);">5</span><span class="t" style="left:12px;top:888.0px;width:30px;height:30px;line-height:30px;text-align:center;font-size:24px;font-weight:400;transform:rotate(-90deg);">6</span><span class="t" style="left:12px;top:922.0px;width:30px;height:30px;line-height:30px;text-align:center;font-size:24px;font-weight:400;transform:rotate(-90deg);">7</span><div class="a" style="left:0px;top:949px;width:48px;height:15px;background:linear-gradient(#EDEDED,#DCDCDC);border:1px solid #ADADAD;border-left:none;"></div><div class="a" style="left:0px;top:965px;width:48px;height:15px;background:linear-gradient(#EDEDED,#DCDCDC);border:1px solid #ADADAD;border-left:none;"></div><svg style="left:18px;top:953.5px" width="10.4" height="5.8" viewBox="0 0 10.4 5.8"><polygon points="0,5.8 10.4,5.8 5.2,0" fill="#000"/></svg><svg style="left:18px;top:970px" width="10.4" height="5.8" viewBox="0 0 10.4 5.8"><polygon points="0,0 10.4,0 5.2,5.8" fill="#000"/></svg><div class="a" style="left:735px;top:751px;width:670px;height:232px;background:#F0F0F0;border:1px solid #585858;"></div><svg style="left:748px;top:760px" width="150" height="24" viewBox="748 760 150 24" ><polygon points="749.6,766.2 770.4,766.2 760,779.6" fill="#C3C3C3"/><polygon points="782.6,778.4 801.4,778.4 792,766" fill="#636363" stroke="#3C3C3C" stroke-width="1.4" stroke-linejoin="round"/><rect x="821" y="763.1" width="13.8" height="13.6" rx="1.6" fill="none" stroke="#1E1E1E" stroke-width="1.9"/><rect x="826.1" y="774.3" width="11.8" height="5.4" fill="#8A8A8A"/><rect x="849" y="763" width="13.8" height="13" rx="1.4" fill="#F0F0F0" stroke="#1E1E1E" stroke-width="1.8"/><rect x="853" y="767" width="13.8" height="13.6" rx="1.4" fill="#F0F0F0" stroke="#1E1E1E" stroke-width="1.8"/><text x="859.9" y="779.2" text-anchor="middle" style="font-family:'Liberation Sans',sans-serif;font-weight:700;font-size:11.5px;fill:#1E1E1E">A</text><rect x="877" y="763" width="17.8" height="15.8" rx="1.4" fill="#F4F4F4" stroke="#1E1E1E" stroke-width="1.8"/><path d="M883.6,764 V778 M889,764 V778" stroke="#A8A8A0" stroke-width="1.5"/></svg><svg style="left:914px;top:758px" width="192" height="28" viewBox="914 758 192 28" ><circle cx="922.3" cy="767.3" r="4.6" fill="#E8E8E8" stroke="#2A2A2A" stroke-width="1.8"/><path d="M925.6999999999999,770.6999999999999 L931.3,775.6999999999999" stroke="#2A2A2A" stroke-width="2.4" stroke-linecap="round"/><circle cx="955" cy="767" r="4.6" fill="#F6F6F6" stroke="#C2C2C2" stroke-width="1.8"/><path d="M958.4,770.4 L964,775.4" stroke="#C2C2C2" stroke-width="2.4" stroke-linecap="round"/><circle cx="986.6" cy="767" r="4.6" fill="#F6F6F6" stroke="#C2C2C2" stroke-width="1.8"/><path d="M990.0,770.4 L995.6,775.4" stroke="#C2C2C2" stroke-width="2.4" stroke-linecap="round"/><path d="M958.6,778.8 H952.6 Q950.6,778.8 950.6,776.4 M953.4,775.8 L950.4,778.8 L953.4,781.8" fill="none" stroke="#C2C2C2" stroke-width="1.5" transform="translate(0,1)"/><path d="M982,776 Q982,779.8 985,779.8 H989.4 M986.6,776.8 L989.6,779.8 L986.6,782.8" fill="none" stroke="#C2C2C2" stroke-width="1.5"/><polygon points="1015.7,766.4 1036,766.4 1025.9,779.3" fill="#C8C8C8"/><polygon points="1043.8,779 1064,779 1053.9,765.6" fill="#C8C8C8"/><path d="M1084,764.4 L1100,779.8 M1100,764.4 L1084,779.8" stroke="#3E3E3E" stroke-width="3.6" stroke-linecap="round"/></svg><div class="a" style="left:1140px;top:754px;width:260px;height:36px;overflow:hidden"><span class="t" style="left:3.50px;top:5.23px;font-size:23px;line-height:30px;letter-spacing:0.582px;">Crear documento nuevo</span></div><div class="a" style="left:736px;top:791px;width:664px;height:191px;background:#fff;border-top:1.3px solid #000;"></div><div class="a" style="left:1016px;top:791px;width:2px;height:107px;background:#000;"></div><div class="a" style="left:782px;top:864px;width:234px;height:34px;background:#D9D9D9;"></div><div class="a" style="left:1054px;top:864px;width:218px;height:34px;background:#D9D9D9;"></div><div class="a" style="left:738.5px;top:800px;width:18px;height:18px;background:#fff;border:2px solid #000;"></div><div class="a" style="left:742.5px;top:808px;width:10px;height:2px;background:#000;"></div><svg style="left:764.8px;top:799.8px" width="22.4" height="21" viewBox="0 0 22.4 21" fill="none" stroke="#800000" stroke-width="2"><path d="M8.3,1.0 H1.0 V20.0 H8.3"/><path d="M14.099999999999998,1.0 H21.4 V20.0 H14.099999999999998"/></svg><span class="t" style="left:796.90px;top:797.23px;font-size:23px;line-height:30px;font-weight:700;letter-spacing:1.230px;-webkit-text-stroke:0.35px;">Matriz</span><svg style="left:745px;top:818px" width="36" height="66" viewBox="745 818 36 66" ><path d="M747,819 V881 M748,845 H780 M748,881 H780" fill="none" stroke="#6E6E6E" stroke-width="2" stroke-dasharray="2 2"/></svg><span class="t" style="left:786.60px;top:833.63px;font-size:23px;line-height:30px;letter-spacing:0.659px;">[1]</span><span class="t" style="left:786.60px;top:869.63px;font-size:23px;line-height:30px;letter-spacing:0.659px;">[2]</span><span class="t" style="left:1022.60px;top:797.13px;font-size:23px;line-height:30px;letter-spacing:-0.211px;">[1..2]</span><svg style="left:1025.4px;top:840px" width="27" height="13" viewBox="0 0 27 13"><text class="ab" x="0" y="10.5" textLength="3.8" lengthAdjust="spacingAndGlyphs" style="font-size:14px;font-weight:400;stroke-width:0.2px">"</text><text class="ab" x="3.6" y="11.9" textLength="17.6" lengthAdjust="spacingAndGlyphs">AB</text><text class="ab" x="22.2" y="10.5" textLength="3.8" lengthAdjust="spacingAndGlyphs" style="font-size:14px;font-weight:400;stroke-width:0.2px">"</text></svg><span class="t" style="left:1058.40px;top:833.33px;font-size:23px;line-height:30px;color:#D2691E;letter-spacing:0.148px;">sslmode:disable</span><svg style="left:1025.4px;top:876px" width="27" height="13" viewBox="0 0 27 13"><text class="ab" x="0" y="10.5" textLength="3.8" lengthAdjust="spacingAndGlyphs" style="font-size:14px;font-weight:400;stroke-width:0.2px">"</text><text class="ab" x="3.6" y="11.9" textLength="17.6" lengthAdjust="spacingAndGlyphs">AB</text><text class="ab" x="22.2" y="10.5" textLength="3.8" lengthAdjust="spacingAndGlyphs" style="font-size:14px;font-weight:400;stroke-width:0.2px">"</text></svg><span class="t" style="left:1058.40px;top:868.73px;font-size:23px;line-height:30px;color:#D2691E;letter-spacing:0.385px;">connect_timeout:10</span><div class="a" style="left:1371px;top:792px;width:29px;height:190px;background:#F4F4F4;"></div><svg style="left:1377.5px;top:804px" width="18.5" height="10" viewBox="0 0 18.5 10"><polygon points="0,10 18.5,10 9.25,0" fill="#CDCDD5"/></svg><svg style="left:1377.5px;top:959.5px" width="18.5" height="10" viewBox="0 0 18.5 10"><polygon points="0,0 18.5,0 9.25,10" fill="#CDCDD5"/></svg><div class="a" id="bottomtabs" style="left:0;top:983px;width:1400px;height:44px;background:#F0F0F0"><div class="a" style="left:0px;top:0px;width:1400px;height:2px;background:#FBFBFB;"></div><div class="a" style="left:0px;top:2px;width:1400px;height:1px;background:#747474;"></div><div class="a" style="left:114px;top:0px;width:176px;height:44px;background:#fff;border:1px solid #8C8C8C;border-top:none;border-radius:0 0 3px 3px;"></div><span class="t" style="left:1.60px;top:10.13px;font-size:23px;line-height:30px;color:#707078;letter-spacing:0.109px;">Mensajes</span><span class="t" style="left:120.90px;top:10.13px;font-size:23px;line-height:30px;letter-spacing:-0.083px;">XPath/XQuery</span><span class="t" style="left:296.00px;top:10.13px;font-size:23px;line-height:30px;color:#707078;letter-spacing:-0.674px;">Esquema XSL</span><span class="t" style="left:459.00px;top:10.13px;font-size:23px;line-height:30px;color:#707078;letter-spacing:-1.569px;">HTTP</span><span class="t" style="left:533.40px;top:10.13px;font-size:23px;line-height:30px;color:#707078;letter-spacing:-2.381px;">XULE</span><span class="t" style="left:604.00px;top:10.13px;font-size:23px;line-height:30px;color:#707078;letter-spacing:0.054px;">Buscar en archivos</span><span class="t" style="left:830.00px;top:10.13px;font-size:23px;line-height:30px;color:#707078;letter-spacing:0.026px;">Buscar en esquemas</span><span class="t" style="left:1074.00px;top:10.13px;font-size:23px;line-height:30px;color:#707078;letter-spacing:-0.557px;">Buscar en XBRL</span><span class="t" style="left:1264.00px;top:10.13px;font-size:23px;line-height:30px;color:#707078;letter-spacing:-0.090px;">Gráficos</span><div class="a" style="left:452px;top:7px;width:1px;height:34px;background:#A8A8A8;"></div><div class="a" style="left:526px;top:7px;width:1px;height:34px;background:#A8A8A8;"></div><div class="a" style="left:597px;top:7px;width:1px;height:34px;background:#A8A8A8;"></div><div class="a" style="left:823px;top:7px;width:1px;height:34px;background:#A8A8A8;"></div><div class="a" style="left:1067px;top:7px;width:1px;height:34px;background:#A8A8A8;"></div><div class="a" style="left:1257px;top:7px;width:1px;height:34px;background:#A8A8A8;"></div></div></body></html>
